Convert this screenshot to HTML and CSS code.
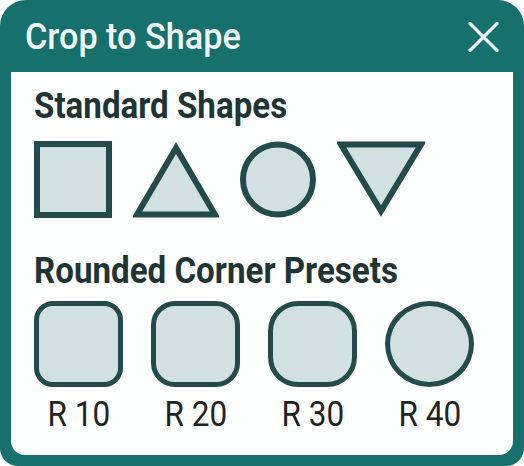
FILE: index.html
```html
<!DOCTYPE html>
<html>
<head>
<meta charset="utf-8">
<link rel="stylesheet" href="styles.css">
</head>
<body>
<div class="dialog">
  <div class="header">
    <span class="title">Crop to Shape</span>
    <svg class="close" width="31" height="30" viewBox="0 0 31 30">
      <path d="M2 1.5 L29 28.5 M29 1.5 L2 28.5" stroke="#eaf5f3" stroke-width="3.2" stroke-linecap="round"/>
    </svg>
  </div>
  <div class="panel">
    <h2 class="heading"><span class="cond">Standard Shapes</span></h2>
    <div class="shapes">
      <svg width="78" height="77" viewBox="0 0 78 77"><rect x="3" y="3" width="72" height="71" class="shp"/></svg>
      <svg width="86" height="77" viewBox="0 0 86 77"><polygon points="43,7 4,73.5 82,73.5" class="shp"/></svg>
      <svg width="76" height="77" viewBox="0 0 76 77"><circle cx="38" cy="38.5" r="35" class="shp"/></svg>
      <svg width="88" height="77" viewBox="0 0 88 77"><polygon points="4,3.5 84,3.5 44,70" class="shp"/></svg>
    </div>
    <h2 class="heading heading2"><span class="cond">Rounded Corner Presets</span></h2>
    <div class="presets">
      <div class="preset"><div class="box r10"></div><div class="label"><span class="cond">R 10</span></div></div>
      <div class="preset"><div class="box r20"></div><div class="label"><span class="cond">R 20</span></div></div>
      <div class="preset"><div class="box r30"></div><div class="label"><span class="cond">R 30</span></div></div>
      <div class="preset"><div class="box r40"></div><div class="label"><span class="cond">R 40</span></div></div>
    </div>
  </div>
</div>
</body>
</html>
```
FILE: styles.css
```css
html, body {
  margin: 0;
  padding: 0;
  background: #ffffff;
}
body {
  font-family: Roboto, "Liberation Sans", sans-serif;
}
.dialog {
  width: 524px;
  height: 466px;
  background: #16706c;
  border-radius: 26px 26px 18px 18px;
  display: flex;
  flex-direction: column;
  box-sizing: border-box;
}
.header {
  height: 72px;
  flex: none;
  display: flex;
  align-items: flex-start;
  justify-content: space-between;
  padding: 19px 25px 0 25px;
  box-sizing: border-box;
}
.title {
  display: inline-block;
  font-size: 36px;
  line-height: 36px;
  font-weight: 500;
  color: #f2faf9;
  transform: scaleX(0.95);
  transform-origin: left center;
  white-space: nowrap;
}
.close {
  margin-top: 3px;
  margin-right: 0;
}
.panel {
  flex: 1;
  margin: 0 11px 11px 11px;
  background: #fdfefe;
  border-radius: 0 0 14px 14px;
  padding: 14px 0 0 23px;
}
.heading {
  margin: 0;
  font-size: 36px;
  line-height: 40px;
  font-weight: 700;
  color: #1f3535;
  white-space: nowrap;
}
.cond {
  display: inline-block;
  transform: scaleX(0.92);
  transform-origin: left center;
}
.shapes {
  display: flex;
  gap: 21px;
  margin-top: 15px;
  height: 77px;
}
.shp {
  fill: #d3e0e2;
  stroke: #234b4b;
  stroke-width: 6;
}
.heading2 {
  margin-top: 33px;
}
.presets {
  display: grid;
  grid-template-columns: repeat(4, 89px);
  column-gap: 28px;
  margin-top: 10px;
}
.preset {
  display: flex;
  flex-direction: column;
  align-items: center;
}
.box {
  width: 89px;
  height: 86px;
  box-sizing: border-box;
  border: 5px solid #234b4b;
  background: #d3e0e2;
}
.r10 { border-radius: 19px; }
.r20 { border-radius: 24px; }
.r30 { border-radius: 30px; }
.r40 { border-radius: 50%; }
.label {
  margin-top: 8px;
  font-size: 35px;
  line-height: 40px;
  color: #1e2424;
  white-space: nowrap;
}
.label .cond {
  transform: scaleX(0.9);
  transform-origin: center center;
}
```
